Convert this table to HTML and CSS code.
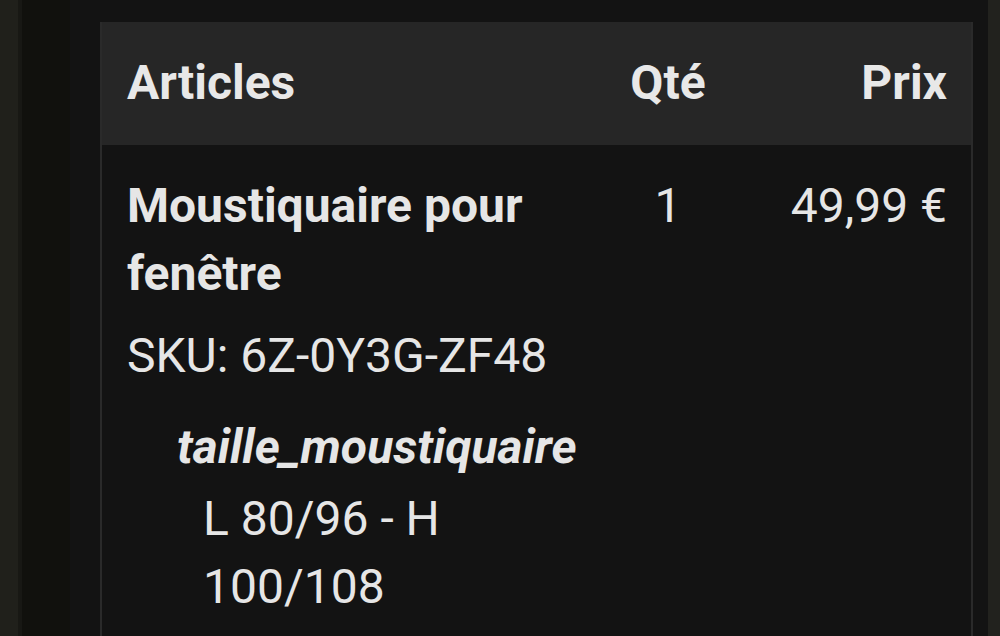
FILE: index.html
```html
<!DOCTYPE html>
<html lang="fr">
<head>
    <meta charset="UTF-8">
    <meta name="viewport" content="width=device-width, initial-scale=1.0">
    <title>Commande</title>
    <link rel="stylesheet" href="styles.css">
</head>
<body>

    <div class="screen">
        <div class="rail-left"></div>
        <div class="gutter"></div>

        <div class="main">
            <table class="order">
                <colgroup>
                    <col class="col-item">
                    <col class="col-qty">
                    <col class="col-price">
                </colgroup>
                <thead>
                    <tr>
                        <th class="item">Articles</th>
                        <th class="qty">Qté</th>
                        <th class="price">Prix</th>
                    </tr>
                </thead>
                <tbody>
                    <tr>
                        <td class="item">
                            <div class="name">Moustiquaire pour fenêtre</div>
                            <div class="sku">SKU: 6Z-0Y3G-ZF48</div>
                            <ul class="meta">
                                <li>
                                    <strong class="meta-label">taille_moustiquaire</strong>
                                    <p class="meta-value">L 80/96 - H 100/108</p>
                                </li>
                            </ul>
                        </td>
                        <td class="qty">1</td>
                        <td class="price">49,99&nbsp;€</td>
                    </tr>
                </tbody>
            </table>
        </div>

        <div class="rail-right"></div>
    </div>

</body>
</html>
```

FILE: styles.css
```css
html, body {
    margin: 0;
    height: 100%;
}
body {
    font-family: Roboto, "Liberation Sans", Arial, sans-serif;
    background-color: #131313;
    color: #e6e6e6;
    overflow: hidden;
}
.screen {
    display: flex;
    height: 100%;
}
.rail-left {
    width: 18px;
    background-color: #20201b;
    border-right: 4px solid #181814;
}
.gutter {
    width: 48px;
    background-color: #11110d;
}
.main {
    flex: 1;
    background-color: #131313;
    padding: 22px 15px 0 30px;
    overflow: hidden;
}
.rail-right {
    width: 12px;
    background-color: #22221e;
}
.order {
    width: 100%;
    table-layout: fixed;
    border-collapse: collapse;
    border-left: 2px solid #2a2a2a;
    border-right: 2px solid #2a2a2a;
    font-size: 48px;
    line-height: 68px;
}
.col-item {
    width: 510px;
}
.col-qty {
    width: 114px;
}
th, td {
    padding: 27px 24px 27px 25px;
    vertical-align: top;
}
thead th {
    background-color: #262626;
    color: #e8e8e8;
    font-weight: 700;
    padding-bottom: 28px;
}
tbody td {
    background-color: #131313;
}
.item {
    text-align: left;
}
.qty {
    text-align: center;
    padding-left: 0;
    padding-right: 0;
}
.price {
    text-align: right;
}
.name {
    font-weight: 700;
}
.sku {
    margin-top: 14px;
}
.meta {
    list-style: none;
    margin: 23px 0 0 0;
    padding: 0 0 0 50px;
}
.meta-label {
    font-style: italic;
    font-weight: 700;
}
.meta-value {
    margin: 4px 0 0 26px;
}
```
